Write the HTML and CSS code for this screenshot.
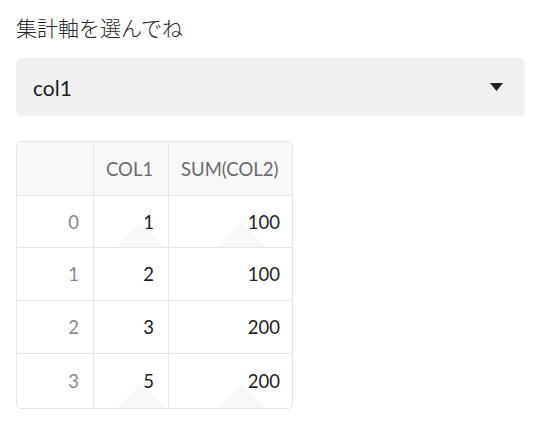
FILE: index.html
```html
<!DOCTYPE html>
<html lang="ja">
<head>
<meta charset="utf-8">
<link rel="stylesheet" href="styles.css">
</head>
<body>
<div class="app">
  <div class="label">集計軸を選んでね</div>
  <div class="select">
    <span class="select-value">col1</span>
    <svg class="caret" width="13" height="8" viewBox="0 0 13 8"><path d="M0 0H13L6.5 8Z" fill="#1e1e1e"/></svg>
  </div>
  <div class="grid">
    <div class="cell head"></div>
    <div class="cell head">COL1</div>
    <div class="cell head last">SUM(COL2)</div>

    <div class="cell idx">0</div>
    <div class="cell num shade">1</div>
    <div class="cell num last shade">100</div>

    <div class="cell idx">1</div>
    <div class="cell num">2</div>
    <div class="cell num last">100</div>

    <div class="cell idx">2</div>
    <div class="cell num">3</div>
    <div class="cell num last">200</div>

    <div class="cell idx bottom">3</div>
    <div class="cell num bottom shade">5</div>
    <div class="cell num last bottom shade">200</div>
  </div>
</div>
</body>
</html>
```
FILE: styles.css
```css
* { box-sizing: border-box; }
html, body { margin: 0; padding: 0; background: #ffffff; }
body {
  font-family: "Lato", "Noto Sans CJK JP", sans-serif;
  color: #262626;
}
.app {
  padding: 12px 10px 0 16px;
  display: flex;
  flex-direction: column;
}
.label {
  font-family: "Noto Sans CJK JP", sans-serif;
  font-size: 21px;
  line-height: 30px;
  height: 30px;
  color: #262626;
  font-weight: 300;
}
.select {
  margin-top: 16px;
  height: 58px;
  background: #f0f0f0;
  border-radius: 6px;
  display: flex;
  align-items: center;
  justify-content: space-between;
  padding: 0 22px 0 17px;
}
.select-value {
  font-size: 21px;
  color: #1e1e1e;
}
.caret { display: block; }
.grid {
  margin-top: 25px;
  width: 277px;
  display: grid;
  grid-template-columns: 77px 75px 125px;
  grid-template-rows: 54px 52px 53px 53px 54px;
  border: 1px solid #e6e6e6;
  border-radius: 5px;
  overflow: hidden;
}
.cell {
  position: relative;
  display: flex;
  align-items: center;
  border-right: 1px solid #e6e6e6;
  border-bottom: 1px solid #e6e6e6;
  font-size: 18.5px;
  overflow: hidden;
}
.cell.last { border-right: none; }
.cell.bottom { border-bottom: none; }
.head {
  background: #f8f8f8;
  color: #6b6b6b;
  padding-left: 12px;
}
.idx {
  justify-content: flex-end;
  padding-right: 14px;
  color: #8a8a8a;
}
.num {
  justify-content: flex-end;
  padding-right: 14px;
  color: #1e1e1e;
}
.shade::after {
  content: "";
  position: absolute;
  bottom: 0;
  left: 50%;
  transform: translateX(-30%);
  width: 0;
  height: 0;
  border-left: 24px solid transparent;
  border-right: 24px solid transparent;
  border-bottom: 24px solid #f8f8f8;
  z-index: 0;
}
```
